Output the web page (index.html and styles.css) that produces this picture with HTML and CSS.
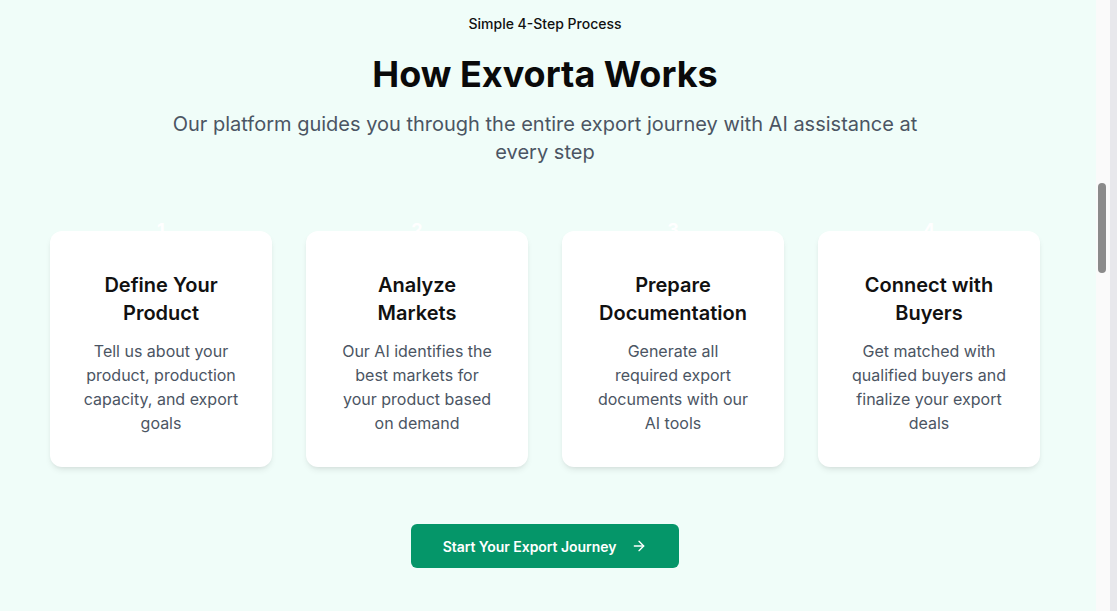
FILE: index.html
```html
<!DOCTYPE html>
<html lang="en">
<head>
<meta charset="utf-8">
<title>How Exvorta Works</title>
<link rel="stylesheet" href="styles.css">
</head>
<body>
<div class="page">
  <main class="content">
    <p class="eyebrow">Simple 4-Step Process</p>
    <h1 class="title">How Exvorta Works</h1>
    <p class="lead">Our platform guides you through the entire export journey with AI assistance at every step</p>

    <div class="steps">
      <div class="card">
        <span class="num">1</span>
        <h3 class="card-title">Define Your Product</h3>
        <p class="card-text">Tell us about your product, production capacity, and export goals</p>
      </div>
      <div class="card">
        <span class="num">2</span>
        <h3 class="card-title">Analyze Markets</h3>
        <p class="card-text">Our AI identifies the best markets for your product based on demand</p>
      </div>
      <div class="card">
        <span class="num">3</span>
        <h3 class="card-title">Prepare Documentation</h3>
        <p class="card-text">Generate all required export documents with our AI tools</p>
      </div>
      <div class="card">
        <span class="num">4</span>
        <h3 class="card-title">Connect with Buyers</h3>
        <p class="card-text">Get matched with qualified buyers and finalize your export deals</p>
      </div>
    </div>

    <div class="cta-row">
      <a class="cta" href="#">Start Your Export Journey
        <svg class="arrow" width="16" height="16" viewBox="0 0 24 24" fill="none" stroke="currentColor" stroke-width="2" stroke-linecap="round" stroke-linejoin="round"><path d="M5 12h14"/><path d="M12 5l7 7-7 7"/></svg>
      </a>
    </div>
  </main>
</div>
<div class="scrollbar"><div class="thumb"></div></div>
<div class="edge"></div>
</body>
</html>
```

FILE: styles.css
```css
* { box-sizing: border-box; }
html, body { height: 100%; }
body {
  margin: 0;
  display: flex;
  overflow: hidden;
  font-family: Inter, "Noto Sans", "Liberation Sans", sans-serif;
  background: #f0fdf9;
}
.page {
  flex: 1;
  padding-right: 6px;
  background: #f0fdf9;
}
.content {
  display: flex;
  flex-direction: column;
  align-items: center;
  padding-top: 14px;
}
.eyebrow {
  margin: 0;
  font-size: 14px;
  line-height: 20px;
  font-weight: 500;
  color: #111111;
}
.title {
  margin: 20px 0 0;
  font-size: 36px;
  line-height: 40px;
  font-weight: 700;
  color: #0a0a0a;
}
.lead {
  margin: 16px 0 0;
  max-width: 768px;
  text-align: center;
  font-size: 20px;
  line-height: 28px;
  color: #4b5563;
}
.steps {
  margin-top: 65px;
  display: grid;
  grid-template-columns: repeat(4, 222px);
  gap: 34px;
  position: relative;
  z-index: 0;
}
.card {
  position: relative;
  background: #ffffff;
  border-radius: 12px;
  box-shadow: 0 4px 6px -1px rgba(0,0,0,0.08), 0 2px 4px -2px rgba(0,0,0,0.08);
  padding: 40px 32px 32px;
  text-align: center;
  height: 236px;
}
.num {
  position: absolute;
  top: -15px;
  left: 0;
  right: 0;
  text-align: center;
  font-size: 18px;
  line-height: 28px;
  font-weight: 700;
  color: #ffffff;
  z-index: -1;
}
.card-title {
  margin: 0;
  font-size: 20px;
  line-height: 28px;
  font-weight: 600;
  color: #111111;
}
.card-text {
  margin: 12px 0 0;
  font-size: 16px;
  line-height: 24px;
  color: #4b5563;
}
.cta-row {
  margin-top: 57px;
  display: flex;
  justify-content: center;
}
.cta {
  display: flex;
  align-items: center;
  gap: 15px;
  height: 44px;
  padding: 0 32px 0 32px;
  background: #059669;
  color: #ffffff;
  border-radius: 6px;
  text-decoration: none;
  font-size: 14px;
  font-weight: 600;
  letter-spacing: -0.05px;
}
.arrow { display: block; }
.scrollbar {
  width: 14px;
  background: #fafafa;
  padding: 183px 4px 0 2px;
}
.thumb {
  width: 8px;
  height: 90px;
  border-radius: 4px;
  background: #8a8a8a;
}
.edge {
  width: 7px;
  background: #e8e8ec;
}
```
